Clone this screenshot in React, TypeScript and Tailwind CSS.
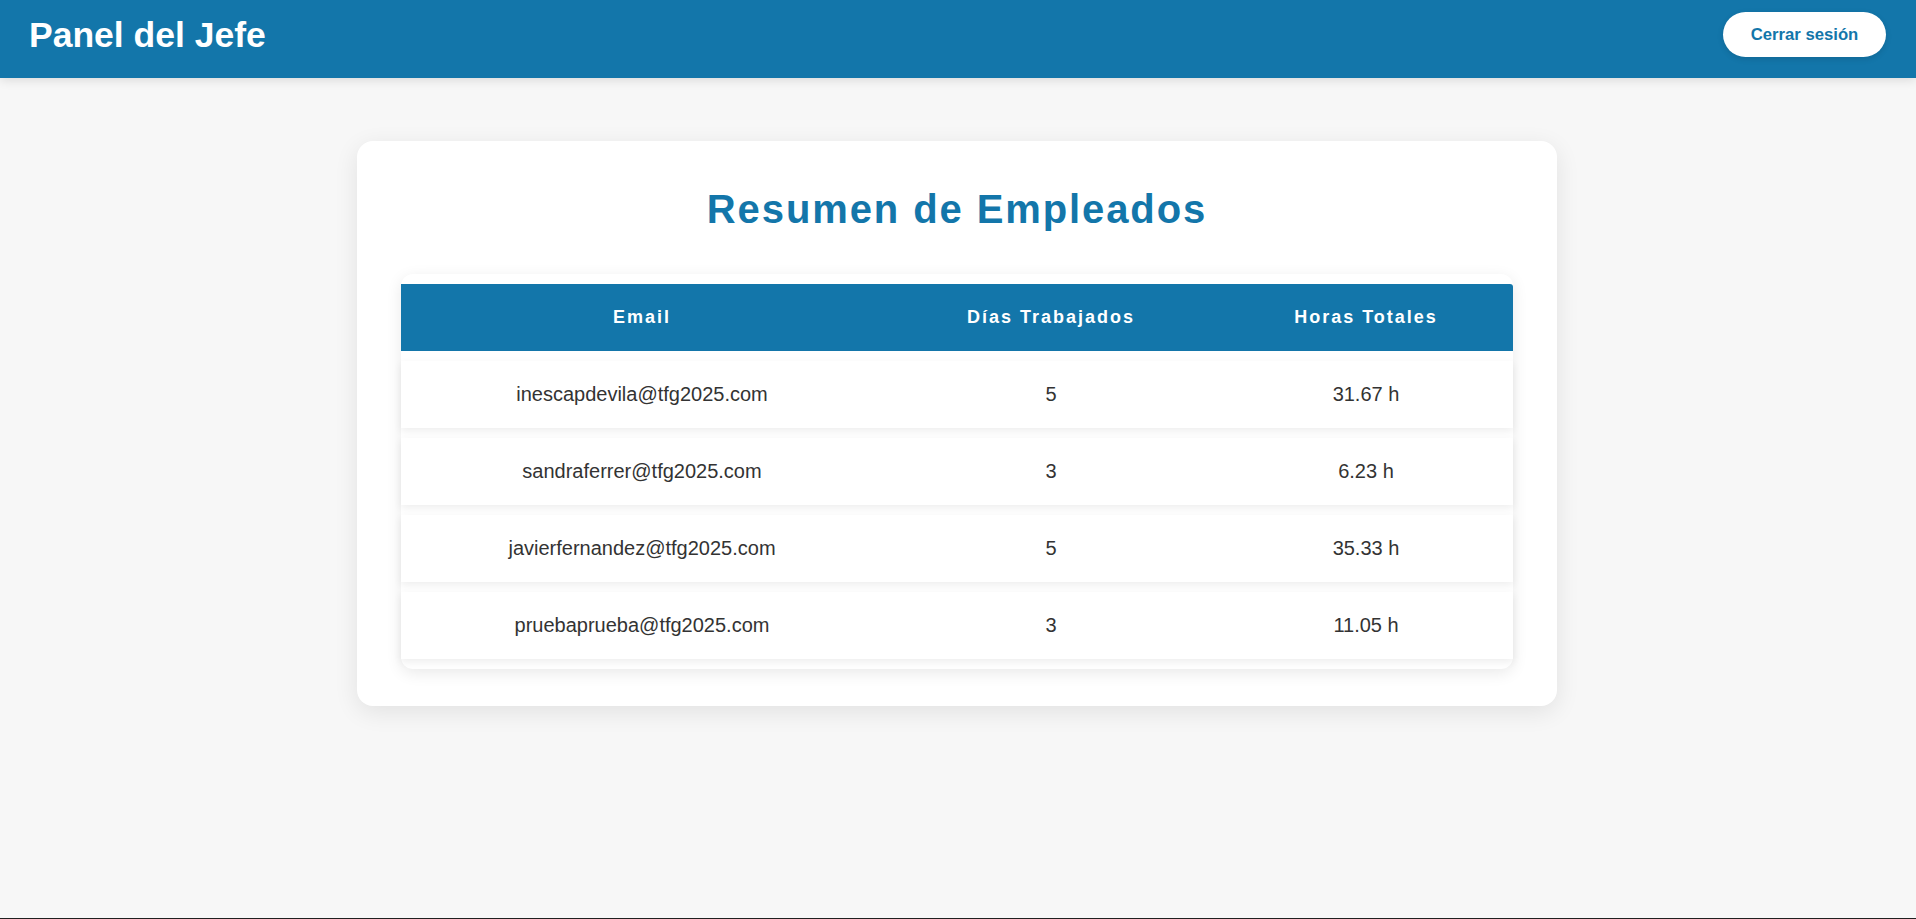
import React from 'react';

interface Empleado {
    email: string;
    dias: number;
    horas: string;
}

const empleados: Empleado[] = [
    { email: 'inescapdevila@tfg2025.com', dias: 5, horas: '31.67 h' },
    { email: 'sandraferrer@tfg2025.com', dias: 3, horas: '6.23 h' },
    { email: 'javierfernandez@tfg2025.com', dias: 5, horas: '35.33 h' },
    { email: 'pruebaprueba@tfg2025.com', dias: 3, horas: '11.05 h' },
];

const cols = 'grid grid-cols-[482px_336px_294px] items-center text-center';

const App: React.FC = () => {
    return (
        <div className="flex h-[919px] flex-col bg-[#f7f7f7] font-['Liberation_Sans',Arial,sans-serif]">
            {/* cabecera */}
            <header className="z-10 flex h-[78px] shrink-0 items-center justify-between bg-[#1376aa] px-[29px] pb-[9px] shadow-[0_2px_10px_rgba(0,0,0,0.12)]">
                <h1 className="text-[35.5px] leading-[40px] font-bold text-white">Panel del Jefe</h1>
                <button className="mr-px h-[45px] w-[163px] rounded-full bg-white text-[16.7px] font-bold text-[#1376aa] shadow-[0_2px_6px_rgba(0,0,0,0.12)]">
                    Cerrar sesión
                </button>
            </header>

            <main className="flex-1">
                <div className="mx-auto mt-[63px] w-[1200px] -translate-x-px rounded-[16px] bg-white px-[44px] pt-[45px] pb-[37px] shadow-[0_6px_24px_rgba(0,0,0,0.09)]">
                    <h2 className="text-center text-[40px] leading-[46px] font-bold tracking-[1.9px] text-[#1376aa]">
                        Resumen de Empleados
                    </h2>

                    <div className="mt-[42px] flex flex-col gap-[10px] rounded-[12px] bg-white py-[10px] shadow-[0_4px_16px_rgba(0,0,0,0.09)]">
                        <div className={`${cols} h-[67px] rounded-tr-[3px] bg-[#1376aa] text-[18px] font-bold tracking-[2px] text-white`}>
                            <div>Email</div>
                            <div>Días Trabajados</div>
                            <div>Horas Totales</div>
                        </div>
                        {empleados.map((e) => (
                            <div
                                key={e.email}
                                className={`${cols} h-[67px] bg-white pb-px text-[20px] text-[#333333] shadow-[0_3px_8px_rgba(0,0,0,0.07)]`}
                            >
                                <div>{e.email}</div>
                                <div>{e.dias}</div>
                                <div>{e.horas}</div>
                            </div>
                        ))}
                    </div>
                </div>
            </main>

            <div className="h-px shrink-0 bg-[#202020]" />
        </div>
    );
};

export default App;
